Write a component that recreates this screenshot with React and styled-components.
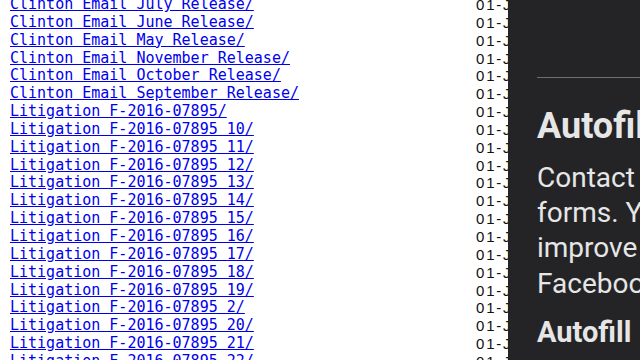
import React from "react";
import styled, { createGlobalStyle } from "styled-components";

const GlobalStyle = createGlobalStyle`
  html, body {
    margin: 0;
    padding: 0;
    background: #ffffff;
    overflow: hidden;
  }
`;

const folders = [
  "Clinton Email July Release/",
  "Clinton Email June Release/",
  "Clinton Email May Release/",
  "Clinton Email November Release/",
  "Clinton Email October Release/",
  "Clinton Email September Release/",
  "Litigation F-2016-07895/",
  "Litigation F-2016-07895 10/",
  "Litigation F-2016-07895 11/",
  "Litigation F-2016-07895 12/",
  "Litigation F-2016-07895 13/",
  "Litigation F-2016-07895 14/",
  "Litigation F-2016-07895 15/",
  "Litigation F-2016-07895 16/",
  "Litigation F-2016-07895 17/",
  "Litigation F-2016-07895 18/",
  "Litigation F-2016-07895 19/",
  "Litigation F-2016-07895 2/",
  "Litigation F-2016-07895 20/",
  "Litigation F-2016-07895 21/",
  "Litigation F-2016-07895 22/",
  "Litigation F-2016-07895 23/",
];

const Page = styled.div`
  display: flex;
  height: 360px;
  overflow: hidden;
`;

const Listing = styled.div`
  width: 498px;
  flex: none;
  padding-left: 10px;
  margin-top: -4px;
  overflow: hidden;
`;

const Row = styled.div`
  display: grid;
  grid-template-columns: 466px auto;
  height: 17.85px;
  line-height: 17.85px;
  white-space: nowrap;
`;

const FolderLink = styled.a`
  font-family: "DejaVu Sans Mono", monospace;
  font-size: 15px;
  color: #0000ee;
  text-decoration: underline;
`;

const Date = styled.span`
  font-family: "Liberation Sans", Arial, sans-serif;
  font-size: 15px;
  letter-spacing: 1.8px;
  color: #111;
`;

const Panel = styled.aside`
  flex: none;
  width: 103px;
  padding-left: 29px;
  background: #242426;
  color: #e6e6e6;
  font-family: Roboto, "Noto Sans", sans-serif;
  overflow: hidden;
  white-space: nowrap;
`;

const Divider = styled.hr`
  margin: 77px 0 0;
  width: 400px;
  border: none;
  border-top: 1px solid #6e6e70;
`;

const Heading = styled.h2`
  margin: ${(p) => p.$top}px 0 0;
  font-size: ${(p) => p.$size}px;
  line-height: ${(p) => p.$line}px;
  font-weight: 700;
`;

const Body = styled.p`
  margin: 13.1px 0 0;
  font-size: 28px;
  line-height: 35.3px;
  font-weight: 400;
`;

const Line = styled.span`
  display: block;
`;

export default function App() {
  return (
    <>
      <GlobalStyle />
      <Page>
        <Listing>
          {folders.map((name) => (
            <Row key={name}>
              <FolderLink href="#">{name}</FolderLink>
              <Date>01-Jan-2017 00:00</Date>
            </Row>
          ))}
        </Listing>
        <Panel>
          <Divider />
          <Heading $top={26.7} $size={36} $line={42}>
            Autofill
          </Heading>
          <Body>
            <Line>Contact info you've saved can be used to fill</Line>
            <Line>forms. Your info may also be used to help</Line>
            <Line>improve your experience across</Line>
            <Line>Facebook products.</Line>
          </Body>
          <Heading $top={14} $size={29} $line={34}>
            Autofill
          </Heading>
        </Panel>
      </Page>
    </>
  );
}
